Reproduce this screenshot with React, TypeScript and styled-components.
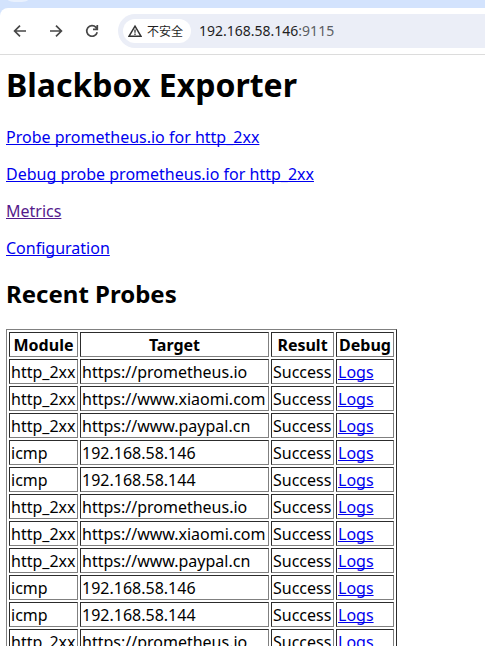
import React from "react";
import styled, { createGlobalStyle } from "styled-components";

const GlobalStyle = createGlobalStyle`
  html { scrollbar-width: none; }
  body {
    margin: 0;
    background: #fff;
    color: #000;
    font: 16px/21px "Noto Sans", "Noto Sans CJK SC", sans-serif;
  }
`;

const TabStrip = styled.div`
  height: 8px;
  padding-left: 8px;
  background: #d3e3fd;
  overflow: hidden;
`;

const TabSearch = styled.div`
  width: 20px;
  height: 2px;
  background: #e9f1fe;
  border-radius: 0 0 10px 10px / 0 0 2px 2px;
`;

const ToolbarBack = styled.div`
  background: #d3e3fd;
`;

const Toolbar = styled.header`
  display: flex;
  align-items: center;
  height: 46px;
  padding-left: 10px;
  background: #fff;
  border-bottom: 1px solid #dcdcdc;
  border-top-left-radius: 8px;
`;

const NavButtons = styled.nav`
  display: flex;
  gap: 16px;
  margin-right: 16px;
`;

const NavButton = styled.button`
  display: flex;
  align-items: center;
  justify-content: center;
  width: 20px;
  height: 20px;
  padding: 0;
  border: 0;
  background: none;
  color: #474747;
`;

const AddressBar = styled.div`
  display: flex;
  flex: 1;
  align-items: center;
  gap: 8px;
  min-width: 0;
  height: 34px;
  padding-left: 5px;
  background: #ebeef7;
  border-radius: 17px 0 0 17px;
`;

const SecurityChip = styled.button`
  display: flex;
  flex: none;
  align-items: center;
  gap: 5px;
  height: 24px;
  padding: 0 8px 0 5px;
  border: 0;
  border-radius: 12px;
  background: #fff;
  color: #1f1f1f;
  font: 12px/24px "Noto Sans CJK SC", sans-serif;
`;

const AddressBox = styled.div`
  flex: 1;
  min-width: 0;
  font-size: 14px;
  line-height: 24px;
  color: #1f1f1f;
`;

const Port = styled.span`
  color: #5c5e63;
`;

const Content = styled.main`
  padding: 9px 6px 0;
`;

const Title = styled.h1`
  margin: 0 0 21px;
  font-size: 32px;
  line-height: 42px;
`;

const Subtitle = styled.h2`
  margin: 19px 0 20px;
  font-size: 24px;
  line-height: 31px;
`;

const Paragraph = styled.p`
  margin: 0 0 16px;
`;

const Link = styled.a<{ $visited?: boolean }>`
  color: ${(p) => (p.$visited ? "#551a8b" : "#0000ee")};
  text-decoration: underline;
  text-decoration-skip-ink: none;
  text-underline-offset: 1px;
`;

const ProbeTable = styled.table`
  border: 1px solid;
  border-color: #808080 #2c2c2c #2c2c2c #808080;
  border-spacing: 2px;
  white-space: nowrap;
`;

const Column = styled.col<{ $width: number }>`
  width: ${(p) => p.$width}px;
`;

const cell = `
  padding: 2px 1px 0;
  border: 1px solid;
  border-color: #2c2c2c #808080 #808080 #2c2c2c;
`;

const HeadCell = styled.th`${cell}`;
const Cell = styled.td`${cell}`;

const links = [
  { text: "Probe prometheus.io for http_2xx", href: "#probe" },
  { text: "Debug probe prometheus.io for http_2xx", href: "#debug" },
  { text: "Metrics", href: "#metrics", visited: true },
  { text: "Configuration", href: "#config" },
];

const cycle = [
  ["http_2xx", "https://prometheus.io"],
  ["http_2xx", "https://www.xiaomi.com"],
  ["http_2xx", "https://www.paypal.cn"],
  ["icmp", "192.168.58.146"],
  ["icmp", "192.168.58.144"],
];
const probes = [...cycle, ...cycle, cycle[0]];

const stroke = { fill: "none", stroke: "currentColor", strokeWidth: 1.7 };

export default function App() {
  return (
    <>
      <GlobalStyle />
      <TabStrip>
        <TabSearch />
      </TabStrip>
      <ToolbarBack>
        <Toolbar>
          <NavButtons>
            <NavButton aria-label="Back">
              <svg width="16" height="16" viewBox="0 0 16 16" {...stroke}>
                <path d="M14 8H3M8 2.6 2.6 8 8 13.4" />
              </svg>
            </NavButton>
            <NavButton aria-label="Forward">
              <svg width="16" height="16" viewBox="0 0 16 16" {...stroke}>
                <path d="M2 8h11M8 2.6 13.4 8 8 13.4" />
              </svg>
            </NavButton>
            <NavButton aria-label="Reload">
              <svg width="16" height="16" viewBox="0 0 16 16" {...stroke}>
                <path d="M13.2 9.2A5.3 5.3 0 1 1 12 4.4L13 5.6M13.3 2v4.4H9" />
              </svg>
            </NavButton>
          </NavButtons>
          <AddressBar>
            <SecurityChip>
              <svg width="14" height="14" viewBox="0 0 14 14">
                <path d="M7 2.2 12.9 12.2H1.1Z" fill="none" stroke="#333" strokeWidth="1.5" />
                <path d="M7 5.4v3.3M7 9.6v1.4" stroke="#333" strokeWidth="1.3" />
              </svg>
              不安全
            </SecurityChip>
            <AddressBox>
              192.168.58.146<Port>:9115</Port>
            </AddressBox>
          </AddressBar>
        </Toolbar>
      </ToolbarBack>
      <Content>
        <Title>Blackbox Exporter</Title>
        {links.map((l) => (
          <Paragraph key={l.text}>
            <Link href={l.href} $visited={l.visited}>
              {l.text}
            </Link>
          </Paragraph>
        ))}
        <Subtitle>Recent Probes</Subtitle>
        <ProbeTable>
          <colgroup>
            <Column $width={69} />
            <Column $width={189} />
            <Column $width={63} />
            <Column $width={58} />
          </colgroup>
          <thead>
            <tr>
              <HeadCell>Module</HeadCell>
              <HeadCell>Target</HeadCell>
              <HeadCell>Result</HeadCell>
              <HeadCell>Debug</HeadCell>
            </tr>
          </thead>
          <tbody>
            {probes.map(([module, target], i) => (
              <tr key={i}>
                <Cell>{module}</Cell>
                <Cell>{target}</Cell>
                <Cell>Success</Cell>
                <Cell>
                  <Link href={`#logs-${i}`}>Logs</Link>
                </Cell>
              </tr>
            ))}
          </tbody>
        </ProbeTable>
      </Content>
    </>
  );
}
